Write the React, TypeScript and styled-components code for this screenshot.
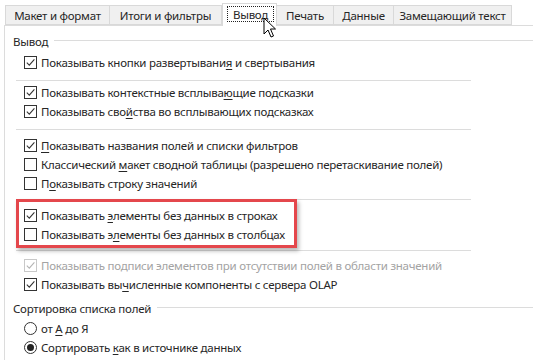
import React from "react";
import styled, { createGlobalStyle } from "styled-components";

const Global = createGlobalStyle`
  html, body { margin: 0; padding: 0; background: #ffffff; }
  body { font-family: "Noto Sans", "Open Sans", sans-serif; font-size: 11.5px; letter-spacing: -0.25px; color: #262626; }
`;

const Page = styled.div`
  position: relative;
  width: 533px;
  height: 360px;
  overflow: hidden;
  background: #ffffff;
`;

const TabBar = styled.div`
  display: flex;
  align-items: flex-end;
  height: 25px;
  padding-left: 5px;
  position: relative;
  z-index: 1;
`;

const Tab = styled.div<{ $w: number; $active?: boolean }>`
  box-sizing: border-box;
  width: ${(p) => p.$w}px;
  height: ${(p) => (p.$active ? 23 : 20)}px;
  margin-bottom: ${(p) => (p.$active ? -1 : 0)}px;
  background: ${(p) => (p.$active ? "#ffffff" : "#f0f0f0")};
  border: 1px solid #d9d9d9;
  border-bottom: ${(p) => (p.$active ? "none" : "1px solid #d9d9d9")};
  border-left: ${(p) => (p.$active ? "1px solid #d9d9d9" : "none")};
  &:first-child { border-left: 1px solid #d9d9d9; }
  display: flex;
  align-items: ${(p) => (p.$active ? "flex-start" : "center")};
  justify-content: center;
  padding-top: ${(p) => (p.$active ? 2 : 0)}px;
  white-space: nowrap;
  color: #262626;
`;

const Focus = styled.span`
  box-sizing: border-box;
  border: 1px dotted #222;
  width: 47px;
  height: 16px;
  display: flex;
  align-items: center;
  justify-content: center;
  margin-left: 2px;
`;

const Panel = styled.div`
  margin-left: 4px;
  border-left: 1px solid #dcdcdc;
  border-top: 1px solid #dcdcdc;
  padding: 7px 0 0 8px;
  height: 340px;
`;

const Header = styled.div<{ $mt?: number }>`
  display: flex;
  align-items: center;
  height: 16px;
  margin-top: ${(p) => p.$mt ?? 0}px;
  white-space: nowrap;
`;

const HeaderLine = styled.div`
  flex: 1;
  height: 1px;
  background: #dcdcdc;
  margin-left: 6px;
  margin-top: -2px;
`;

const Row = styled.div<{ $mt?: number; $disabled?: boolean }>`
  display: flex;
  align-items: center;
  height: 19px;
  margin-top: ${(p) => p.$mt ?? 0}px;
  padding-left: 11px;
  white-space: nowrap;
  color: ${(p) => (p.$disabled ? "#a3a3a3" : "#262626")};
`;

const Label = styled.span`
  margin-left: 4px;
`;

const U = styled.span`
  text-decoration: underline;
  text-underline-offset: 2px;
`;

const Box = styled.span<{ $disabled?: boolean }>`
  box-sizing: border-box;
  width: 13px;
  height: 13px;
  border: 1px solid ${(p) => (p.$disabled ? "#c8c8c8" : "#333333")};
  background: #fff;
  display: inline-flex;
  flex-shrink: 0;
`;

const Radio = styled.span`
  box-sizing: border-box;
  width: 13px;
  height: 13px;
  border: 1px solid #333333;
  border-radius: 50%;
  background: #fff;
  display: inline-flex;
  align-items: center;
  justify-content: center;
  flex-shrink: 0;
`;

const Dot = styled.span`
  width: 7px;
  height: 7px;
  border-radius: 50%;
  background: #222;
`;

const Sep = styled.div<{ $mt: number }>`
  width: 455px;
  height: 1px;
  margin-left: 3px;
  margin-top: ${(p) => p.$mt}px;
  background: #dcdcdc;
`;

const Highlight = styled.div`
  position: relative;
`;

const RedFrame = styled.div`
  position: absolute;
  left: 3px;
  top: -7px;
  width: 281px;
  height: 49px;
  box-sizing: border-box;
  border: 3px solid #e4474c;
  box-shadow: 2px 3px 4px rgba(0, 0, 0, 0.28);
  pointer-events: none;
`;

const Cursor = styled.svg`
  position: absolute;
  left: 263px;
  top: 17px;
  z-index: 5;
`;

const Check = ({ disabled }: { disabled?: boolean }) => (
  <svg width="11" height="11" viewBox="0 0 11 11">
    <path
      d="M1.8 5.6 L4.3 8.1 L9.4 2.4"
      fill="none"
      stroke={disabled ? "#b4b4b4" : "#333"}
      strokeWidth="1.1"
    />
  </svg>
);

const CB = ({ checked, disabled }: { checked?: boolean; disabled?: boolean }) => (
  <Box $disabled={disabled}>{checked && <Check disabled={disabled} />}</Box>
);

export default function App() {
  return (
    <Page>
      <Global />
      <TabBar>
        <Tab $w={105}>Макет и формат</Tab>
        <Tab $w={112}>Итоги и фильтры</Tab>
        <Tab $w={55} $active>
          <Focus>Вывод</Focus>
        </Tab>
        <Tab $w={57}>Печать</Tab>
        <Tab $w={60}>Данные</Tab>
        <Tab $w={118}>Замещающий текст</Tab>
      </TabBar>
      <Panel>
        <Header>
          Вывод
          <HeaderLine />
        </Header>
        <Row $mt={4}>
          <CB checked />
          <Label>Показывать кнопки развертывани<U>я</U> и свертывания</Label>
        </Row>
        <Sep $mt={8} />
        <Row $mt={2}>
          <CB checked />
          <Label>Показывать контекстные всплыва<U>ю</U>щие подсказки</Label>
        </Row>
        <Row>
          <CB checked />
          <Label>Показывать сво<U>й</U>ства во всплывающих подсказках</Label>
        </Row>
        <Sep $mt={8} />
        <Row $mt={6}>
          <CB checked />
          <Label><U>П</U>оказывать названия полей и списки фильтров</Label>
        </Row>
        <Row>
          <CB />
          <Label>Классический <U>м</U>акет сводной таблицы (разрешено перетаскивание полей)</Label>
        </Row>
        <Row>
          <CB />
          <Label>П<U>о</U>казывать строку значений</Label>
        </Row>
        <Sep $mt={6} />
        <Highlight>
          <Row $mt={6}>
            <CB checked />
            <Label>Показывать <U>э</U>лементы без данных в строках</Label>
          </Row>
          <Row>
            <CB />
            <Label>Показывать э<U>л</U>ементы без данных в столбцах</Label>
          </Row>
          <RedFrame />
        </Highlight>
        <Sep $mt={6} />
        <Row $mt={5} $disabled>
          <CB checked disabled />
          <Label>Показывать подписи элементов при отсутствии полей в области значений</Label>
        </Row>
        <Row>
          <CB checked />
          <Label>Показывать вы<U>ч</U>исленные компоненты с сервера OLAP</Label>
        </Row>
        <Header $mt={6}>
          Сортировка списка полей
          <HeaderLine />
        </Header>
        <Row $mt={3}>
          <Radio />
          <Label>от <U>А</U> до Я</Label>
        </Row>
        <Row>
          <Radio>
            <Dot />
          </Radio>
          <Label>Сортировать <U>к</U>ак в источнике данных</Label>
        </Row>
      </Panel>
      <Cursor width="14" height="22" viewBox="0 0 14 22">
        <path
          d="M1 1 L1 17 L5 13 L8 20 L10.5 19 L7.5 12 L12.5 12 Z"
          fill="#ffffff"
          stroke="#000000"
          strokeWidth="1"
          strokeLinejoin="miter"
        />
      </Cursor>
    </Page>
  );
}
